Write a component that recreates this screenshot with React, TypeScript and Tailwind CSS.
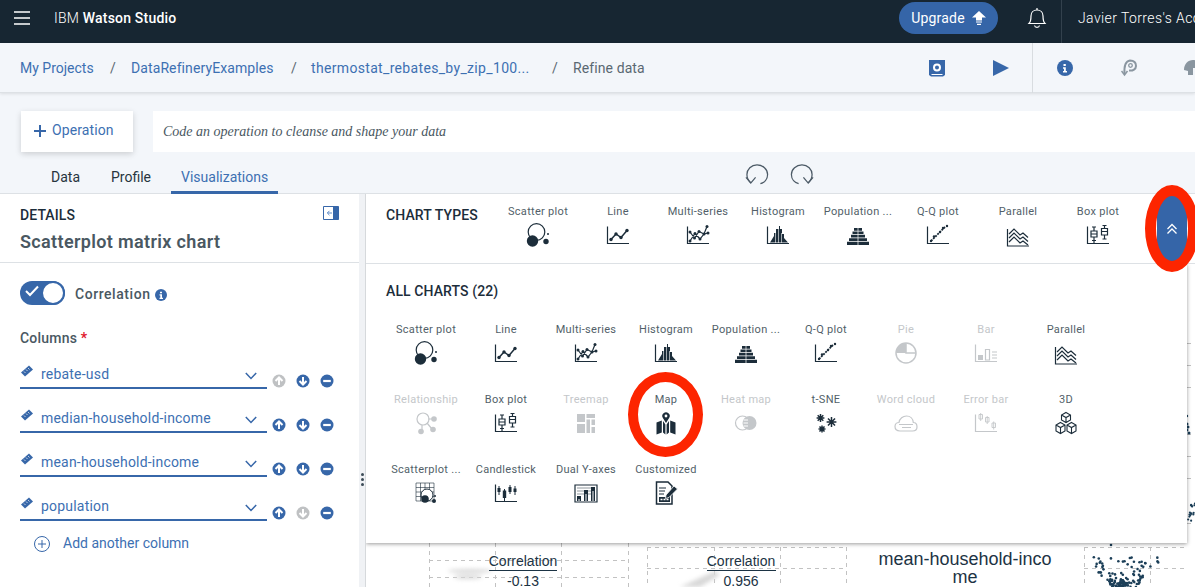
import React from "react";

const D = "#1c2d3a";
const L = "#c4c7ca";

function Axis({ c }: { c: string }) {
  return <path d="M1.5 3.5V20.5H23" fill="none" stroke={c} strokeWidth="1.2" />;
}

function Dots({ pts, c, r = 1.3 }: { pts: number[][]; c: string; r?: number }) {
  return (
    <>
      {pts.map(([x, y], i) => (
        <circle key={i} cx={x} cy={y} r={r} fill={c} />
      ))}
    </>
  );
}

function Glyph({ name, c }: { name: string; c: string }) {
  const s = { fill: "none", stroke: c, strokeWidth: 1.2 };
  switch (name) {
    case "scatter":
      return (
        <>
          <circle cx="10.500" cy="9" r="8.300" {...s} />
          <circle cx="6.500" cy="18" r="5.700" fill={c} />
          <circle cx="20" cy="18.500" r="2.700" fill={c} />
          <circle cx="22" cy="11" r="1" fill={c} />
        </>
      );
    case "line":
      return (
        <>
          <Axis c={c} />
          <path d="M5 16.500L10 11L15 14.500L21 7.500" {...s} strokeWidth={1.500} />
          <Dots c={c} r={1.700} pts={[[5, 16.500], [10, 11], [15, 14.500], [21, 7.500]]} />
        </>
      );
    case "multi":
      return (
        <>
          <Axis c={c} />
          <path d="M4 9L8.500 15L13 8.500L18 11L21 3.500M4 18L9 10.500L14 16L18 11L22 10" {...s} />
          <Dots c={c} r={1.500} pts={[[4, 18], [4, 9], [8.500, 15], [9, 10.500], [13, 8.500], [14, 16], [18, 11], [21, 3.500], [22, 10]]} />
        </>
      );
    case "histogram":
      return (
        <>
          <Axis c={c} />
          <path d="M4 19.500L8 13V10H10V6H13V3H14V6H16V11H18V15L22 19.500Z" fill={c} />
          <path d="M9.500 10V20M12.500 6V20M15.500 10V20" stroke="#fff" strokeWidth=".6" />
        </>
      );
    case "population":
      return (
        <>
          <path d="M8 5H16V7.700H8ZM6.500 8.400H17.500V11.100H6.500ZM5 11.800H19V14.500H5ZM3 15.200H21V18H3ZM1 18.700H23V22H1Z" fill={c} />
          <path d="M12 5V22" stroke="#fff" strokeWidth=".7" />
        </>
      );
    case "qq":
      return (
        <>
          <Axis c={c} />
          <path d="M5 18L19 4" stroke={c} strokeWidth="1.800" strokeDasharray="2 1" />
          <Dots c={c} r={1.200} pts={[[5, 18], [8, 13.500], [14, 9], [21, 3], [17, 5]]} />
        </>
      );
    case "pie":
      return (
        <>
          <circle cx="12" cy="12" r="10" {...s} strokeWidth={1.500} />
          <path d="M12 2A10 10 0 0 0 2 12H12Z" fill={c} />
          <path d="M12 2V12H22" {...s} strokeWidth={1.500} />
        </>
      );
    case "bar":
      return (
        <>
          <Axis c={c} />
          <path d="M4 14H9V19H4Z" fill={c} />
          <path d="M11.500 8.500H15.500V19H11.500Z" {...s} />
          <path d="M18 11H23M18 14H23M18 17H23" {...s} />
        </>
      );
    case "parallel":
      return (
        <>
          <path d="M1.500 6V23H23" fill="none" stroke={c} strokeWidth="1.200" />
          <path d="M3 11L8 6L14 12L17 10L22 14.500M3 15L8 10L14 16L17 14L22 18.500M3 19L8 14L14 20L17 18L22 22" {...s} />
        </>
      );
    case "relationship":
      return (
        <>
          <circle cx="9" cy="8" r="6" {...s} />
          <path d="M14 8H18M13 12L18 18M8 14V19" {...s} />
          <circle cx="20" cy="8" r="2.800" fill={c} />
          <circle cx="7" cy="20.500" r="2.800" fill={c} />
          <circle cx="19" cy="18.500" r="2.800" fill={c} />
        </>
      );
    case "box":
      return (
        <>
          <Axis c={c} />
          <path d="M5 8H11V14H5ZM8 4V8M8 14V20M6 4H10M5 11H11M6 17.500H10M15.500 5.500H21.500V12H15.500ZM18.500 2V5.500M18.500 12V16M15.500 8.500H21.500M16.500 2.500H20.500M16.500 16H20.500" {...s} />
        </>
      );
    case "treemap":
      return <path d="M3 3H11V11H3ZM3 13H11V22H3ZM12.500 3H21V7H12.500ZM12.500 8.500H16V22H12.500ZM17.500 8.500H21V14H17.500ZM17.500 16H21V22H17.500Z" fill={c} />;
    case "map":
      return (
        <>
          <path d="M2.500 11.500L7.800 9.500V21.500L2.500 23.500ZM9 10L11.400 13.500V23.500L9 21.500ZM12.600 13.500L15 10V21.500L12.600 23.500ZM16.200 9.500L21.500 11.500V23.500L16.200 21.500Z" fill={c} />
          <path d="M12 12L8.900 7A3.700 3.700 0 1 1 15.100 7Z" fill={c} />
          <circle cx="12" cy="5" r="1.400" fill="#fff" />
        </>
      );
    case "heat":
      return (
        <>
          <circle cx="8.500" cy="12" r="7" {...s} />
          <circle cx="15.500" cy="12" r="7" fill={c} />
          <path d="M9.500 9H14M9.500 12H14M9.500 15H14" stroke="#fff" strokeWidth="1" />
        </>
      );
    case "tsne":
      return (
        <>
          {[
            [6.500, 7, 3.900],
            [17.500, 11, 4.900],
            [8, 18, 3.500],
          ].map(([x, y, r], i) => (
            <path
              key={i}
              d={`M${x - r} ${y}H${x + r}M${x} ${y - r}V${y + r}M${x - r * 0.72} ${y - r * 0.72}L${x + r * 0.72} ${y + r * 0.72}M${x + r * 0.72} ${y - r * 0.72}L${x - r * 0.72} ${y + r * 0.72}`}
              stroke={c}
              strokeWidth="1.500"
            />
          ))}
        </>
      );
    case "cloud":
      return (
        <>
          <path d="M6 20C2.500 20 1 18 1 15.500C1 13 3 11.500 5 11.500C5.500 7.500 9 5 12.500 5C16.500 5 19 8 19.300 11.500C21.500 11.500 23 13.500 23 16C23 18.500 21 20 18.500 20Z" {...s} />
          <path d="M5 13.500H19M8 16.500H17" {...s} />
        </>
      );
    case "error":
      return (
        <>
          <Axis c={c} />
          <path d="M5 3.500H8.500V8H5ZM11.500 6.500H15V11H11.500ZM18 12H21.500V16.500H18ZM6.700 2V10M13.200 5V13M19.700 10.500V18.500" {...s} strokeWidth={0.9} />
        </>
      );
    case "3d":
      return (
        <>
          <path d="M12 1.500L16.500 4V9L12 11.500L7.500 9V4ZM7.500 4L12 6.500L16.500 4M12 6.500V11.500M6.500 11.500L11 14V20L6.500 22.500L2 20V14ZM2 14L6.500 16.500L11 14M6.500 16.500V22.500M17.500 11.500L22 14V20L17.500 22.500L13 20V14ZM13 14L17.500 16.500L22 14M17.500 16.500V22.500" {...s} strokeWidth={1.100} />
        </>
      );
    case "matrix":
      return (
        <>
          <path d="M2 2H20V20H2ZM2 6.500H20M2 11H20M2 15.500H20M6.500 2V20M11 2V20M15.500 2V20" fill="none" stroke={c} strokeWidth=".6" />
          <circle cx="13" cy="14" r="6" fill="#fff" stroke={c} strokeWidth="1" />
          <circle cx="11" cy="18" r="3.800" fill={c} />
          <circle cx="20" cy="20" r="2" fill={c} />
          <circle cx="21" cy="15" r="1" fill={c} />
        </>
      );
    case "candle":
      return (
        <>
          <Axis c={c} />
          <path d="M5 5V14M10.500 8V20M16 4V13M21 5V14" stroke={c} strokeWidth="1" />
          <path d="M3.500 7H6.500V11H3.500ZM8.800 9.500H12.200V17H8.800ZM14.500 6H17.500V11H14.500ZM19.500 7.500H22.500V11H19.500Z" fill={c} />
        </>
      );
    case "dual":
      return (
        <>
          <path d="M1 4H23V21H1Z" fill="none" stroke={c} strokeWidth="1.200" />
          <path d="M3 7H21M3 10H21M3 13H21" stroke={c} strokeWidth=".5" />
          <path d="M3 15H7V20H3ZM10 9H14V20H10ZM17 6H21V20H17Z" fill={c} />
          <path d="M5 18V20M12 13V20M19 10V20" stroke="#fff" strokeWidth="1" />
        </>
      );
    case "custom":
      return (
        <>
          <path d="M2.500 1H14L18 5V23H2.500Z" fill="#fff" stroke={c} strokeWidth="1.500" />
          <path d="M5 7H12M5 10H11M5 13H10" stroke={c} strokeWidth="1.200" />
          <path d="M5 16H16V21H5Z" fill={c} />
          <path d="M6.500 18.500H8.500M9.500 18.500H11.500M12.500 18.500H14.500" stroke="#fff" strokeWidth="1.300" />
          <path d="M12 14L20 5L23.500 8L15 16.500L11.500 17.500Z" fill={c} stroke="#fff" strokeWidth=".8" />
        </>
      );
    default:
      return null;
  }
}

type Chart = { label: string; icon: string; off?: boolean };

function ChartItem({ label, icon, off }: Chart) {
  return (
    <div className="w-[80px] flex flex-col items-center">
      <span className={`text-[11px] leading-[14px] tracking-[0.3px] whitespace-nowrap ${off ? "text-[#c4c7ca]" : "text-[#525f69]"}`}>
        {label}
      </span>
      <svg viewBox="0 0 24 24" className="w-[24px] h-[24px] mt-[4px] overflow-visible">
        <Glyph name={icon} c={off ? L : D} />
      </svg>
    </div>
  );
}

const top8: Chart[] = [
  { label: "Scatter plot", icon: "scatter" },
  { label: "Line", icon: "line" },
  { label: "Multi-series", icon: "multi" },
  { label: "Histogram", icon: "histogram" },
  { label: "Population ...", icon: "population" },
  { label: "Q-Q plot", icon: "qq" },
  { label: "Parallel", icon: "parallel" },
  { label: "Box plot", icon: "box" },
];

const all: Chart[] = [
  { label: "Scatter plot", icon: "scatter" },
  { label: "Line", icon: "line" },
  { label: "Multi-series", icon: "multi" },
  { label: "Histogram", icon: "histogram" },
  { label: "Population ...", icon: "population" },
  { label: "Q-Q plot", icon: "qq" },
  { label: "Pie", icon: "pie", off: true },
  { label: "Bar", icon: "bar", off: true },
  { label: "Parallel", icon: "parallel" },
  { label: "Relationship", icon: "relationship", off: true },
  { label: "Box plot", icon: "box" },
  { label: "Treemap", icon: "treemap", off: true },
  { label: "Map", icon: "map" },
  { label: "Heat map", icon: "heat", off: true },
  { label: "t-SNE", icon: "tsne" },
  { label: "Word cloud", icon: "cloud", off: true },
  { label: "Error bar", icon: "error", off: true },
  { label: "3D", icon: "3d" },
  { label: "Scatterplot ...", icon: "matrix" },
  { label: "Candlestick", icon: "candle" },
  { label: "Dual Y-axes", icon: "dual" },
  { label: "Customized", icon: "custom" },
];

function RoundBtn({ kind, off }: { kind: "up" | "down" | "minus"; off?: boolean }) {
  const fill = off ? "#bfc1c3" : "#3767a9";
  return (
    <svg viewBox="0 0 14 14" className="w-[14px] h-[14px]">
      <circle cx="7" cy="7" r="6.500" fill={fill} />
      {kind === "up" && <path d="M3.500 7L7 3.500L10.500 7M7 3.800V11" fill="none" stroke="#fff" strokeWidth="2" />}
      {kind === "down" && <path d="M3.500 7L7 10.500L10.500 7M7 3V10.200" fill="none" stroke="#fff" strokeWidth="2" />}
      {kind === "minus" && <path d="M3.200 7H10.800" fill="none" stroke="#fff" strokeWidth="2.200" />}
    </svg>
  );
}

function ColumnRow({ name, upOff, downOff }: { name: string; upOff?: boolean; downOff?: boolean }) {
  return (
    <div className="flex items-end h-[44px]">
      <div className="w-[247px] h-[34px] border-b-2 border-[#3767a9] flex items-start relative">
        <svg viewBox="0 0 12 12" className="w-[12px] h-[12px] ml-[1px] mt-[10px] shrink-0">
          <path d="M0 7.500L8 0.500L12 4.500L4 11.500Z" fill="#3767a9" />
          <path d="M3 6.500L4.500 8M5 4.500L6.500 6M7 3L8.500 4.500" stroke="#fff" strokeWidth=".7" />
        </svg>
        <span className="ml-[8px] text-[14px] leading-[20px] mt-[9px] tracking-[0.2px] text-[#3d70b2]">{name}</span>
        <svg viewBox="0 0 12 8" className="w-[12px] h-[8px] absolute left-[225px] top-[17px]">
          <path d="M0.800 1L6 6.500L11.200 1" fill="none" stroke="#3767a9" strokeWidth="1.500" />
        </svg>
      </div>
      <div className="flex gap-[10px] ml-[5px] -translate-y-[1px]">
        <RoundBtn kind="up" off={upOff} />
        <RoundBtn kind="down" off={downOff} />
        <RoundBtn kind="minus" />
      </div>
    </div>
  );
}

function ChartBackdrop() {
  const seeded = (i: number) => {
    const v = Math.sin(i * 12.9898) * 43758.5453;
    return v - Math.floor(v);
  };
  const cluster = Array.from({ length: 120 }, (_, i) => {
    const a = seeded(i);
    const b = seeded(i + 500);
    return [1124 + (a - 0.5) * (24 + 55 * b * b), 587 - b * b * 30];
  });
  const side = Array.from({ length: 16 }, (_, i) => [1188 + seeded(i + 900) * 7, 500 + seeded(i + 950) * 22]);
  const dash = { stroke: "#c2c2c2", strokeWidth: 1, strokeDasharray: "4 4", fill: "none" };
  return (
    <svg viewBox="366 264 829 323" className="block w-[829px] h-[323px]">
      <g {...dash}>
        <path d="M429.500 543V587M495.500 543V587M561.500 543V587M628.500 543V587M429 560.500H628M429 577.500H628" />
        <path d="M647.500 547V587M714.500 547V587M780.500 547V587M846.500 547V587M647 547.500H846M647 568.500H846" />
        <path d="M1084.500 547V587M1150.500 547V587M1084 547.500H1187M1084 568.500H1187" />
        <path d="M1187 343.500H1195M1187 365.500H1195M1187 387.500H1195M1187 434.500H1195M1187 456.500H1195M1187 478.500H1195M1187 523.500H1195" />
      </g>
      <g className="blur-[2px]" fill="#d8d8d8">
        <ellipse cx="470" cy="571" rx="22" ry="2" />
        <ellipse cx="468" cy="577" rx="14" ry="2" />
        <path d="M680 587L715 571L720 575L700 587Z" />
      </g>
      <g fill="#1c3f58">
        {cluster.map(([x, y], i) => (
          <circle key={i} cx={x} cy={y} r={1.300} />
        ))}
        {side.map(([x, y], i) => (
          <circle key={i} cx={x} cy={y} r={1.100} />
        ))}
        <circle cx="1187" cy="424" r="1.500" />
        <circle cx="1188" cy="427" r="1.500" />
        <circle cx="1187" cy="430" r="1.500" />
        <circle cx="1189" cy="433" r="1.500" />
        <circle cx="1187" cy="416" r="1.200" />
        <circle cx="1111" cy="545" r="1.300" />
      </g>
      <g fontFamily="Liberation Sans, sans-serif" fill="#1c3344" textAnchor="middle">
        <text x="523" y="566" fontSize="14">Correlation</text>
        <text x="523" y="586" fontSize="14">-0.13</text>
        <text x="741" y="566" fontSize="14">Correlation</text>
        <text x="741" y="586" fontSize="14">0.956</text>
        <text x="965" y="565" fontSize="18">mean-household-inco</text>
        <text x="965" y="583" fontSize="18">me</text>
      </g>
      <path d="M489 570.500H557M707 570.500H776" stroke="#1c3344" strokeWidth="1" />
    </svg>
  );
}

export default function App() {
  return (
    <div className="relative w-[1195px] h-[587px] overflow-hidden bg-[#f3f6fa] font-['Roboto',sans-serif] text-[#1c2d3a]">
      {/* Header */}
      <header className="h-[43px] bg-[#172632] flex items-center pb-[7px] text-white [&>*]:shrink-0">
        <svg viewBox="0 0 16 14" className="w-[16px] h-[14px] ml-[14px]">
          <path d="M0 1H16M0 7H16M0 13H16" stroke="#fff" strokeWidth="1.700" />
        </svg>
        <span className="ml-[24px] text-[14px] tracking-[0.2px] w-[300px] whitespace-nowrap">
          <span className="font-light">IBM</span> <span className="font-medium">Watson Studio</span>
        </span>
        <div className="ml-[545px] w-[99px] h-[32px] rounded-full bg-[#3565a8] flex items-center justify-center gap-[7px] text-[14px] tracking-[0.2px]">
          Upgrade
          <svg viewBox="0 0 14 14" className="w-[14px] h-[14px]">
            <path d="M7 0L14 6.500H10V9.500H4V6.500H0Z" fill="#fff" />
            <path d="M4 11H10M5 13.300H9" stroke="#fff" strokeWidth="1.200" />
          </svg>
        </div>
        <svg viewBox="0 0 20 22" className="w-[20px] h-[22px] ml-[29px]" fill="none" stroke="#fff" strokeWidth="1.200">
          <path d="M2 16.500C4 14.500 4 12 4 9C4 5.500 6.500 3 10 3C13.500 3 16 5.500 16 9C16 12 16 14.500 18 16.500Z" />
          <path d="M10 1V3M7.500 18.500C8 21 12 21 12.500 18.500" />
        </svg>
        <div className="w-px h-[43px] bg-[#33414d] ml-[14px] translate-y-[3px]" />
        <span className="ml-[16px] text-[14px] font-light tracking-[0.4px] whitespace-nowrap">Javier Torres's Account</span>
      </header>

      {/* Breadcrumb */}
      <div className="h-[50px] pt-[1px] bg-[#f3f6fa] flex items-center text-[14px] border-b border-[#dde1e5] shadow-[0_1px_3px_rgba(0,0,0,0.1)] relative whitespace-nowrap [&>*]:shrink-0">
        <span className="ml-[20px] w-[90px] text-[#3d70b2]">My Projects</span>
        <span className="w-[21px] text-[#5a6872]">/</span>
        <span className="w-[160px] tracking-[0.1px] text-[#3d70b2]">DataRefineryExamples</span>
        <span className="w-[20px] text-[#5a6872]">/</span>
        <span className="w-[241px] tracking-[0.33px] text-[#3d70b2]">thermostat_rebates_by_zip_100...</span>
        <span className="w-[21px] text-[#5a6872]">/</span>
        <span className="w-[356px] tracking-[0.1px] text-[#5a6872]">Refine data</span>
        <svg viewBox="0 0 16 18" className="w-[16px] h-[18px] mr-[48px]">
          <path d="M0 1H16V16L14 17.500H2L0 16Z" fill="#3767a9" />
          <circle cx="8" cy="8.500" r="3" fill="none" stroke="#fff" strokeWidth="2" />
          <path d="M2.500 15.500H13.500" stroke="#fff" strokeWidth="1" />
        </svg>
        <svg viewBox="0 0 16 18" className="w-[16px] h-[18px] mr-[23px]">
          <path d="M0 1L16 9L0 17Z" fill="#3767a9" />
        </svg>
        <div className="w-px h-[50px] bg-[#d8dce0]" />
        <svg viewBox="0 0 16 16" className="w-[16px] h-[16px] ml-[24px]">
          <circle cx="8" cy="8" r="8" fill="#3767a9" />
          <path d="M6.500 4H8.800V6H6.500ZM6 7.300H8.800V11H10V12.500H6V11H7V8.700H6Z" fill="#fff" />
        </svg>
        <svg viewBox="0 0 16 18" className="w-[16px] h-[18px] ml-[48px]" fill="none" stroke="#8a96a0" strokeWidth="2">
          <path d="M3.500 15C3 7 4 2 9 1.500C13 1.500 15 4 15 7C15 10 12 12 8 11.500" />
          <circle cx="9.500" cy="6.500" r="1.800" strokeWidth="1.300" />
          <path d="M0.500 12L3.500 16L6.500 12" strokeWidth="1.500" />
        </svg>
        <svg viewBox="0 0 16 18" className="w-[16px] h-[18px] ml-[47px]">
          <path d="M0 11C0 5 4 1 9 1C14 1 16 5 16 9H9V16H4V12Z" fill="#8a96a0" />
        </svg>
      </div>

      {/* Operation row */}
      <div className="mt-[18px] h-[41px] flex pl-[21px]">
        <button className="w-[112px] h-full bg-white shadow-[0_2px_6px_rgba(0,0,0,0.16)] flex items-center pl-[13px] gap-[6px] pb-[2px] text-[14px] tracking-[0.1px] text-[#3d70b2]">
          <svg viewBox="0 0 12 12" className="w-[12px] h-[12px]">
            <path d="M6 0V12M0 6H12" stroke="#3767a9" strokeWidth="2" />
          </svg>
          Operation
        </button>
        <div className="ml-[20px] flex-1 bg-white flex items-center pl-[10px] font-['Liberation_Serif',serif] italic text-[14px] text-[#4a5862]">
          Code an operation to cleanse and shape your data
        </div>
      </div>

      {/* Tabs row */}
      <div className="h-[42px] flex border-b border-[#dde1e5] text-[14px]">
        <div className="ml-[51px] w-[60px] pt-[15px] text-[#27343e]">Data</div>
        <div className="w-[60px] pt-[15px] text-[#27343e]">Profile</div>
        <div className="w-[107px] h-[42px] pt-[15px] pl-[10px] text-[#3d70b2] border-b-[3px] border-[#3767a9]">Visualizations</div>
        <svg viewBox="0 0 26 24" className="w-[25px] h-[24px] ml-[467px] mt-[10px]" fill="none" stroke="#4c5a66" strokeWidth="1.300">
          <path d="M6 21C3 18.500 2 15.500 2 12.500C2 7 6.500 2.500 12.500 2.500C18.500 2.500 23.500 7 23.500 12.500C23.500 17.500 20 21 16 22" />
          <path d="M1 15.500L6 21.500L11 15.500" />
        </svg>
        <svg viewBox="0 0 26 24" className="w-[25px] h-[24px] ml-[19px] mt-[10px]" fill="none" stroke="#4c5a66" strokeWidth="1.300">
          <path d="M20 21C23 18.500 24 15.500 24 12.500C24 7 19.500 2.500 13.500 2.500C7.500 2.500 2.500 7 2.500 12.500C2.500 17.500 6 21 10 22" />
          <path d="M15 15.500L20 21.500L25 15.500" />
        </svg>
      </div>

      {/* Main */}
      <div className="flex h-[394px]">
        {/* Details panel */}
        <aside className="w-[359px] bg-white shrink-0">
          <div className="h-[69px] border-b border-[#dde1e5] px-[20px] pt-[13px] relative">
            <div className="text-[14px] leading-[16px] font-medium tracking-[0.1px] text-[#1c2d3a]">DETAILS</div>
            <div className="mt-[7px] text-[18px] leading-[24px] font-semibold tracking-[0.35px] text-[#4a5862]">Scatterplot matrix chart</div>
            <svg viewBox="0 0 16 14" className="absolute left-[323px] top-[12px] w-[16px] h-[14px]">
              <path d="M0.500 0.500H15.500V13.500H0.500Z" fill="#fff" stroke="#3767a9" />
              <path d="M10 0.500H15.500V13.500H10Z" fill="#3767a9" />
              <path d="M9 7H4.500M6.500 4.800L4.300 7L6.500 9.200" fill="none" stroke="#5e8ac6" strokeWidth="1" />
            </svg>
          </div>
          <div className="pl-[20px]">
            <div className="flex items-center h-[24px] mt-[18px]">
              <div className="w-[45px] h-[24px] rounded-full bg-[#3767a9] relative">
                <svg viewBox="0 0 14 12" className="absolute left-[5px] top-[4px] w-[14px] h-[12px]">
                  <path d="M1 6L5 10L13 1.500" fill="none" stroke="#fff" strokeWidth="2" />
                </svg>
                <div className="absolute right-0 top-0 w-[24px] h-[24px] rounded-full bg-white border-2 border-[#3767a9]" />
              </div>
              <span className="ml-[10px] pt-[3px] text-[14px] font-medium tracking-[0.55px] text-[#4a5862]">Correlation</span>
              <svg viewBox="0 0 12 12" className="ml-[5px] w-[12px] h-[12px] mt-[3px]">
                <circle cx="6" cy="6" r="6" fill="#3767a9" />
                <path d="M5 2.800H7V4.300H5ZM4.500 5.200H7V8.800H8V10H4.500V8.800H5.300V6.400H4.500Z" fill="#fff" />
              </svg>
            </div>
            <div className="mt-[23px] text-[14px] leading-[20px] font-medium tracking-[0.2px] text-[#4a5862]">
              Columns <span className="text-[#e0182d] font-bold">*</span>
            </div>
            <div className="-mt-[3px]">
              <ColumnRow name="rebate-usd" upOff />
              <ColumnRow name="median-household-income" />
              <ColumnRow name="mean-household-income" />
              <ColumnRow name="population" downOff />
            </div>
            <div className="flex items-center mt-[12px] pl-[14px] text-[14px] text-[#3d70b2]">
              <svg viewBox="0 0 16 16" className="w-[16px] h-[16px]" fill="none" stroke="#3767a9" strokeWidth="1">
                <circle cx="8" cy="8" r="7.500" />
                <path d="M8 4V12M4 8H12" />
              </svg>
              <span className="ml-[13px]">Add another column</span>
            </div>
          </div>
        </aside>

        {/* Gutter */}
        <div className="w-[7px] bg-[#f0f2f5] flex flex-col items-center gap-[2px] pt-[279px] shrink-0 border-r border-[#d6d9dc]">
          <div className="w-[3px] h-[3px] rounded-full bg-[#3d4c58]" />
          <div className="w-[3px] h-[3px] rounded-full bg-[#3d4c58]" />
          <div className="w-[3px] h-[3px] rounded-full bg-[#3d4c58]" />
        </div>

        {/* Right side */}
        <section className="flex-1 bg-white min-w-0">
          <div className="h-[70px] border-b border-[#dde1e5] flex pl-[20px]">
            <div className="w-[112px] pt-[13px] text-[14px] leading-[16px] font-medium tracking-[0.1px] whitespace-nowrap text-[#1c2d3a]">CHART TYPES</div>
            <div className="flex pt-[11px]">
              {top8.map((c) => (
                <ChartItem key={c.label} {...c} />
              ))}
            </div>
            <button className="ml-[19px] w-[30px] h-[69px] bg-[#3565a8] flex items-center justify-center">
              <svg viewBox="0 0 12 12" className="w-[12px] h-[12px]">
                <path d="M1.500 6L6 1.500L10.500 6M1.500 10.500L6 6L10.500 10.500" fill="none" stroke="#fff" strokeWidth="1.300" />
              </svg>
            </button>
          </div>
          <div className="relative h-[324px] overflow-hidden">
            <ChartBackdrop />
            <div className="absolute left-0 top-0 w-[821px] h-[279px] bg-white shadow-[0_1px_4px_rgba(0,0,0,0.4)] pl-[20px]">
              <div className="pt-[19px] text-[14px] leading-[16px] font-medium tracking-[0.1px] text-[#1c2d3a]">ALL CHARTS (22)</div>
              <div className="grid grid-cols-[repeat(9,80px)] auto-rows-[70px] mt-[24px]">
                {all.map((c) => (
                  <ChartItem key={c.label + c.icon} {...c} />
                ))}
              </div>
            </div>
          </div>
        </section>
      </div>

      {/* Red annotations */}
      <div className="absolute left-[1145px] top-[185px] w-[54px] h-[87px] rounded-[50%] border-[11px] border-[#fd2500]" />
      <div className="absolute left-[628px] top-[372px] w-[75px] h-[85px] rounded-[50%] border-[10px] border-[#fd2500]" />
    </div>
  );
}
